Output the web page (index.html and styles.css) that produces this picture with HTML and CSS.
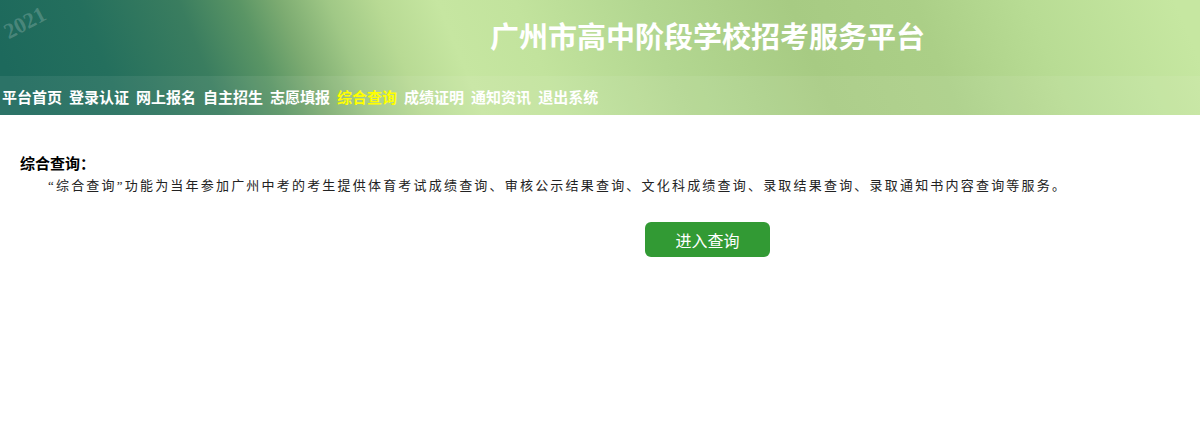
FILE: index.html
```
<!DOCTYPE html>
<html lang="zh-CN">
<head>
    <meta charset="UTF-8">
    <title>广州市高中阶段学校招考服务平台</title>
    <link rel="stylesheet" href="styles.css">
</head>
<body>
    <div class="header">
        <div class="banner">
            <span class="year">2021</span>
            <h1 class="title">广州市高中阶段学校招考服务平台</h1>
        </div>
        <div class="nav">
            <a href="#">平台首页</a>
            <a href="#">登录认证</a>
            <a href="#">网上报名</a>
            <a href="#">自主招生</a>
            <a href="#">志愿填报</a>
            <a href="#" class="active">综合查询</a>
            <a href="#">成绩证明</a>
            <a href="#">通知资讯</a>
            <a href="#">退出系统</a>
        </div>
    </div>

    <div class="content">
        <h2 class="section-title">综合查询：</h2>
        <p class="desc">“综合查询”功能为当年参加广州中考的考生提供体育考试成绩查询、审核公示结果查询、文化科成绩查询、录取结果查询、录取通知书内容查询等服务。</p>
        <div class="actions">
            <a href="#" class="btn">进入查询</a>
        </div>
    </div>
</body>
</html>
```
FILE: styles.css
```
* {
    margin: 0;
    padding: 0;
    box-sizing: border-box;
}

body {
    font-family: "Noto Sans CJK SC", "Noto Sans", sans-serif;
    background: #fff;
    color: #000;
}

a {
    text-decoration: none;
}

/* diagonal green banner: dark teal bottom-left, light green centre */
.header {
    background: linear-gradient(68deg,
        #1d695c 2%,
        #246f5d 10%,
        #3a7d5f 18%,
        #5a9565 22.8%,
        #7cab71 26%,
        #a0c886 30%,
        #b8da94 34%,
        #c6e6a1 38.8%,
        #c2e39d 45%,
        #b3d791 55%,
        #a7cb83 67%,
        #abcf87 77%,
        #b8dc94 86%,
        #c6e7a1 98%);
}

.banner {
    position: relative;
    height: 76px;
    display: flex;
    align-items: center;
    padding-left: 490px;
}

.year {
    position: absolute;
    left: 3px;
    top: 10px;
    font-family: "Liberation Serif", serif;
    font-weight: bold;
    font-size: 22px;
    color: rgba(255, 255, 255, 0.2);
    transform: rotate(-28deg);
}

.title {
    font-size: 29px;
    font-weight: bold;
    color: #fff;
    margin-top: -6px;
}

.nav {
    height: 39px;
    display: flex;
    align-items: center;
    gap: 7px;
    padding-left: 2px;
    background: rgba(255, 255, 255, 0.07);
}

.nav a {
    color: #fff;
    font-size: 15px;
    font-weight: bold;
    line-height: 1;
    margin-top: 2px;
}

.nav a.active {
    color: #ffff00;
}

.content {
    padding: 38px 20px 0;
}

.section-title {
    font-size: 15px;
    font-weight: bold;
    line-height: 20px;
}

.desc {
    font-family: "Liberation Serif", "Noto Sans CJK SC", serif;
    font-size: 13px;
    letter-spacing: 2.2px;
    line-height: 18px;
    color: #222;
    padding-left: 28px;
    margin-top: 4px;
}

.actions {
    padding-left: 625px;
    margin-top: 27px;
}

.btn {
    display: inline-flex;
    align-items: center;
    justify-content: center;
    width: 125px;
    height: 35px;
    background: #329a34;
    border-radius: 6px;
    color: #fff;
    font-size: 16px;
}
```
